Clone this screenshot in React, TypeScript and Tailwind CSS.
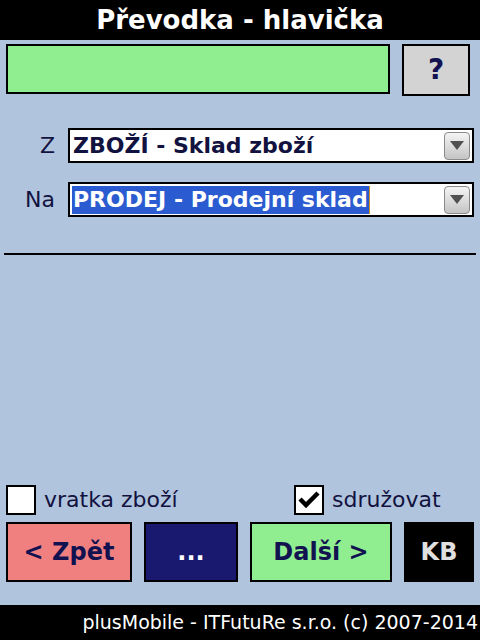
const font = { fontFamily: 'Tahoma, "DejaVu Sans", sans-serif' };

function DropArrow() {
  return (
    <div className="w-[26px] h-[28px] mr-[2px] rounded-[4px] border border-[#8a8a8a] bg-gradient-to-b from-[#f4f4f4] via-[#dcdcdc] to-[#c4c4c4] flex items-start justify-center pt-[8px]">
      <div className="w-0 h-0 border-l-[7px] border-r-[7px] border-t-[9px] border-l-transparent border-r-transparent border-t-[#505050]" />
    </div>
  );
}

function Select({ text, selected }: { text: string; selected?: boolean }) {
  return (
    <div className="w-[406px] h-[35px] border-2 border-black bg-white flex items-center justify-between pl-[2px]">
      <span
        className={
          selected
            ? 'bg-[#2a5bd0] text-white font-bold text-[22px] leading-[28px] px-[1px] border-r border-[#d09020]'
            : 'text-[#121240] font-bold text-[22px] leading-[28px] px-[1px]'
        }
      >
        {text}
      </span>
      <DropArrow />
    </div>
  );
}

function Checkbox({ checked }: { checked?: boolean }) {
  return (
    <div className="w-[30px] h-[30px] border-2 border-black bg-white flex items-center justify-center">
      {checked && (
        <svg width="22" height="20" viewBox="0 0 22 20">
          <path d="M2 9 L8 15 L20 3" stroke="#000" strokeWidth="4.5" fill="none" />
        </svg>
      )}
    </div>
  );
}

export default function App() {
  return (
    <div className="w-[480px] h-[640px] bg-[#b0c4de] flex flex-col" style={font}>
      {/* Title bar */}
      <div className="h-[40px] bg-black flex items-center justify-center">
        <span className="text-white font-bold text-[26px] leading-none">Převodka - hlavička</span>
      </div>

      {/* Code input + help */}
      <div className="flex mt-[4px] pl-[6px]">
        <div className="w-[384px] h-[50px] border-2 border-black bg-[#90ee90]" />
        <div className="ml-[12px] w-[68px] h-[52px] border-2 border-black bg-[#d3d3d3] flex items-center justify-center">
          <span className="text-[#121250] font-bold text-[28px] leading-none">?</span>
        </div>
      </div>

      {/* Warehouses */}
      <div className="flex items-center mt-[32px]">
        <span className="w-[55px] text-right text-[#121240] text-[22px]">Z</span>
        <div className="ml-[13px]">
          <Select text="ZBOŽÍ - Sklad zboží" />
        </div>
      </div>
      <div className="flex items-center mt-[19px]">
        <span className="w-[55px] text-right text-[#121240] text-[22px]">Na</span>
        <div className="ml-[13px]">
          <Select text="PRODEJ - Prodejní sklad" selected />
        </div>
      </div>

      <div className="mt-[36px] mx-[4px] h-[2px] bg-black" />

      <div className="flex-1" />

      {/* Options */}
      <div className="flex items-center pl-[6px]">
        <div className="w-[288px] flex items-center">
          <Checkbox />
          <span className="ml-[8px] text-[#121240] text-[22px]">vratka zboží</span>
        </div>
        <div className="flex items-center">
          <Checkbox checked />
          <span className="ml-[8px] text-[#121240] text-[22px]">sdružovat</span>
        </div>
      </div>

      {/* Buttons */}
      <div className="flex mt-[6px] pl-[6px] gap-[12px] mb-[23px]">
        <button className="w-[126px] h-[60px] border-2 border-black bg-[#f08080] text-[#121250] font-bold text-[24px]">
          &lt; Zpět
        </button>
        <button className="w-[94px] h-[60px] border-2 border-black bg-[#191970] text-white font-bold text-[24px]">
          ...
        </button>
        <button className="w-[142px] h-[60px] border-2 border-black bg-[#90ee90] text-[#121250] font-bold text-[24px]">
          Další &gt;
        </button>
        <button className="w-[70px] h-[60px] bg-black text-[#e0e0e0] font-bold text-[24px]">KB</button>
      </div>

      {/* Footer */}
      <div className="h-[35px] bg-black flex items-center justify-end pr-[2px]">
        <span className="text-white text-[19px] leading-none">plusMobile - ITFutuRe s.r.o. (c) 2007-2014</span>
      </div>
    </div>
  );
}
